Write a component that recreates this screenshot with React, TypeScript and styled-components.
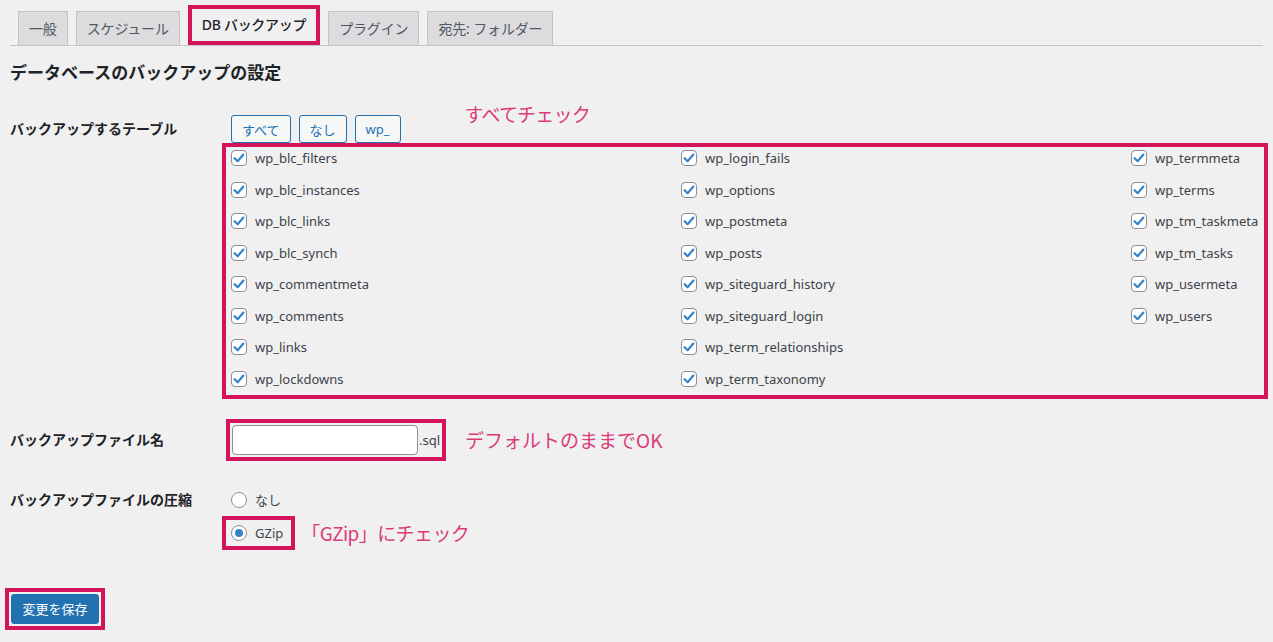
import React from 'react';
import styled, { createGlobalStyle } from 'styled-components';

const GlobalStyle = createGlobalStyle`
    html, body {
        margin: 0;
        background: #f0f0f1;
    }
    body {
        font-family: 'Noto Sans', 'Noto Sans CJK JP', sans-serif;
        color: #3c434a;
    }
`;

const MARK = '#d4145a';
const NOTE = '#dc3a78';

const Page = styled.div`
    padding: 0 10px;
    height: 642px;
    box-sizing: border-box;
    overflow: hidden;
`;

const TabBar = styled.nav`
    display: flex;
    align-items: flex-end;
    gap: 8px;
    height: 46px;
    box-sizing: border-box;
    padding-left: 8px;
    border-bottom: 1px solid #c3c4c7;
`;

const Tab = styled.div<{ $active?: boolean }>`
    box-sizing: border-box;
    height: ${(p) => (p.$active ? '40px' : '34px')};
    line-height: ${(p) => (p.$active ? '32px' : '33px')};
    padding: 0 10px;
    font-size: 14px;
    white-space: nowrap;
    letter-spacing: ${(p) => (p.$active ? '-0.3px' : '-0.15px')};
    background: ${(p) => (p.$active ? '#f0f0f1' : '#dcdcde')};
    color: ${(p) => (p.$active ? '#1d2327' : '#50575e')};
    border: ${(p) => (p.$active ? `4px solid ${MARK}` : '1px solid #c3c4c7')};
    border-bottom: ${(p) => (p.$active ? `4px solid ${MARK}` : 'none')};
    font-weight: ${(p) => (p.$active ? 500 : 400)};
`;

const Title = styled.h2`
    margin: 16px 0 0;
    font-size: 17px;
    line-height: 22px;
    font-weight: 700;
    color: #1d2327;
`;

const FormRow = styled.div<{ $top: number }>`
    display: grid;
    grid-template-columns: 212px 1fr;
    margin-top: ${(p) => p.$top}px;
`;

const Label = styled.div<{ $line: number }>`
    font-size: 14px;
    font-weight: 700;
    color: #1d2327;
    line-height: ${(p) => p.$line}px;
    white-space: nowrap;
`;

const ButtonRow = styled.div`
    display: flex;
    align-items: flex-start;
    gap: 8px;
    height: 28px;
    padding-left: 9px;
`;

const SmallButton = styled.button`
    box-sizing: border-box;
    height: 28px;
    padding: 0 10px;
    font-family: inherit;
    font-size: 13px;
    color: #2271b1;
    background: #f6f7f7;
    border: 1px solid #2271b1;
    border-radius: 3px;
`;

const Note = styled.span<{ $shift?: number }>`
    font-family: 'Noto Sans CJK JP', sans-serif;
    font-size: 19px;
    line-height: 22px;
    color: ${NOTE};
    white-space: nowrap;
    margin-left: ${(p) => p.$shift ?? 0}px;
`;

const RaisedNote = styled(Note)`
    margin-top: -12px;
    letter-spacing: -0.8px;
`;

const BracketNote = styled(Note)`
    letter-spacing: -0.6px;
`;

const TableBox = styled.div`
    box-sizing: border-box;
    width: 1046px;
    border: 4px solid ${MARK};
    padding: 0 0 5px 5px;
    display: grid;
    grid-auto-flow: column;
    grid-template-rows: repeat(8, 22px);
    grid-template-columns: repeat(3, 450px);
    row-gap: 9.57px;
`;

const CheckItem = styled.label`
    display: flex;
    align-items: center;
    gap: 8px;
    font-size: 13px;
    color: #3c434a;
    white-space: nowrap;
`;

const CheckBox = styled.span`
    box-sizing: border-box;
    width: 16px;
    height: 16px;
    border: 1px solid #8c8f94;
    border-radius: 4px;
    background: #fff;
    display: flex;
    align-items: center;
    justify-content: center;
    flex: none;
`;

const NameRow = styled.div`
    display: flex;
    align-items: center;
`;

const NameBox = styled.div`
    display: flex;
    align-items: center;
    box-sizing: border-box;
    height: 42px;
    margin-left: 4px;
    padding: 0 2px;
    border: 4px solid ${MARK};
`;

const TextInput = styled.div`
    box-sizing: border-box;
    width: 186px;
    height: 30px;
    background: #fff;
    border: 1px solid #8c8f94;
    border-radius: 4px;
`;

const Suffix = styled.span`
    font-size: 13px;
    color: #3c434a;
    margin-left: 1px;
`;

const RadioGroup = styled.div`
    display: flex;
    flex-direction: column;
    align-items: flex-start;
    gap: 6px;
`;

const RadioLine = styled.div`
    display: flex;
    align-items: center;
`;

const RadioItem = styled.label<{ $boxed?: boolean }>`
    display: flex;
    align-items: center;
    gap: 8px;
    box-sizing: border-box;
    height: ${(p) => (p.$boxed ? '34px' : '20px')};
    padding: ${(p) => (p.$boxed ? '0 8px 0 5px' : '0 0 0 9px')};
    border: ${(p) => (p.$boxed ? `4px solid ${MARK}` : 'none')};
    font-size: 13px;
    color: #3c434a;
`;

const RadioDot = styled.span<{ $on?: boolean }>`
    box-sizing: border-box;
    width: 16px;
    height: 16px;
    border-radius: 50%;
    border: 1px solid #8c8f94;
    background: #fff;
    display: flex;
    align-items: center;
    justify-content: center;

    &::after {
        content: '';
        width: 8px;
        height: 8px;
        border-radius: 50%;
        background: ${(p) => (p.$on ? '#3582c4' : 'transparent')};
    }
`;

const SubmitBox = styled.div`
    display: inline-block;
    margin: 38px 0 0 -5px;
    padding: 2px;
    border: 4px solid ${MARK};
`;

const PrimaryButton = styled.button`
    display: block;
    box-sizing: border-box;
    height: 30px;
    width: 88px;
    padding: 0;
    font-family: 'Noto Sans CJK JP', sans-serif;
    font-size: 13px;
    color: #fff;
    background: #2271b1;
    border: 1px solid #2271b1;
    border-radius: 3px;
`;

const tables = [
    'wp_blc_filters', 'wp_blc_instances', 'wp_blc_links', 'wp_blc_synch',
    'wp_commentmeta', 'wp_comments', 'wp_links', 'wp_lockdowns',
    'wp_login_fails', 'wp_options', 'wp_postmeta', 'wp_posts',
    'wp_siteguard_history', 'wp_siteguard_login', 'wp_term_relationships', 'wp_term_taxonomy',
    'wp_termmeta', 'wp_terms', 'wp_tm_taskmeta', 'wp_tm_tasks', 'wp_usermeta', 'wp_users',
];

const tabs = ['一般', 'スケジュール', 'DB バックアップ', 'プラグイン', '宛先: フォルダー'];

function Check() {
    return (
        <CheckBox>
            <svg width="14" height="14" viewBox="0 0 14 14">
                <path d="M2.6 7.2 L5.6 10.2 L11.4 3.6" fill="none" stroke="#3582c4" strokeWidth="2.2" strokeLinecap="round" strokeLinejoin="round" />
            </svg>
        </CheckBox>
    );
}

export default function App() {
    return (
        <>
            <GlobalStyle />
            <Page>
                <TabBar>
                    {tabs.map((t) => (
                        <Tab key={t} $active={t === 'DB バックアップ'}>{t}</Tab>
                    ))}
                </TabBar>

                <Title>データベースのバックアップの設定</Title>

                <FormRow $top={31}>
                    <Label $line={28}>バックアップするテーブル</Label>
                    <div>
                        <ButtonRow>
                            <SmallButton>すべて</SmallButton>
                            <SmallButton>なし</SmallButton>
                            <SmallButton>wp_</SmallButton>
                            <RaisedNote $shift={56}>すべてチェック</RaisedNote>
                        </ButtonRow>
                        <TableBox>
                            {tables.map((t) => (
                                <CheckItem key={t}>
                                    <Check />
                                    {t}
                                </CheckItem>
                            ))}
                        </TableBox>
                    </div>
                </FormRow>

                <FormRow $top={20}>
                    <Label $line={42}>バックアップファイル名</Label>
                    <NameRow>
                        <NameBox>
                            <TextInput />
                            <Suffix>.sql</Suffix>
                        </NameBox>
                        <Note $shift={19}>デフォルトのままでOK</Note>
                    </NameRow>
                </FormRow>

                <FormRow $top={29}>
                    <Label $line={20}>バックアップファイルの圧縮</Label>
                    <RadioGroup>
                        <RadioItem>
                            <RadioDot />
                            なし
                        </RadioItem>
                        <RadioLine>
                            <RadioItem $boxed>
                                <RadioDot $on />
                                GZip
                            </RadioItem>
                            <BracketNote $shift={6}>「GZip」にチェック</BracketNote>
                        </RadioLine>
                    </RadioGroup>
                </FormRow>

                <SubmitBox>
                    <PrimaryButton>変更を保存</PrimaryButton>
                </SubmitBox>
            </Page>
        </>
    );
}
